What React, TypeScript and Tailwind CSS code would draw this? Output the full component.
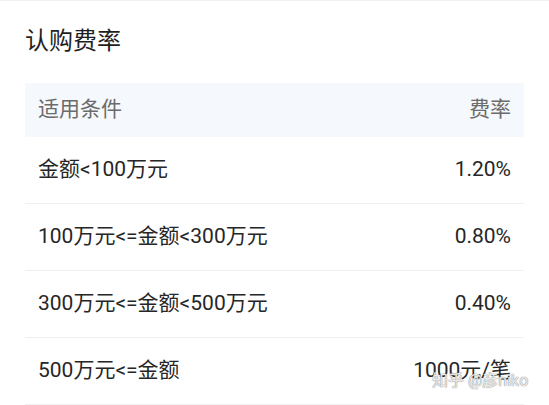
const rows = [
  { cond: '金额<100万元', rate: '1.20%' },
  { cond: '100万元<=金额<300万元', rate: '0.80%' },
  { cond: '300万元<=金额<500万元', rate: '0.40%' },
  { cond: '500万元<=金额', rate: '1000元/笔' },
];

export default function App() {
  return (
    <div
      className="relative w-[549px] h-[405px] overflow-hidden bg-white border-t border-[#f2f2f2]"
      style={{ fontFamily: 'Roboto, "Noto Sans CJK SC", sans-serif' }}
    >
      <div className="px-[25px] pt-[22px]">
        <h1 className="text-[24px] leading-[36px] text-[#1f1f1f] mb-[24px]">认购费率</h1>

        <div className="w-[499px]">
          <div className="h-[54px] bg-[#f5f8fc] flex items-center justify-between px-[13px] text-[21px] text-[#6b6b6b]">
            <span>适用条件</span>
            <span>费率</span>
          </div>
          {rows.map((r) => (
            <div
              key={r.cond}
              className="h-[67px] border-b border-[#f0f0f0] flex items-center justify-between px-[13px] text-[21px] text-[#262626]"
            >
              <span>{r.cond}</span>
              <span>{r.rate}</span>
            </div>
          ))}
        </div>
      </div>

      <div
        className="absolute left-[432px] top-[370px] text-[16px] leading-[20px] text-white/80"
        style={{ textShadow: '0 0 1px #8a8a8a, 0 0 1px #8a8a8a' }}
      >
        知乎 @彦niko
      </div>
    </div>
  );
}
